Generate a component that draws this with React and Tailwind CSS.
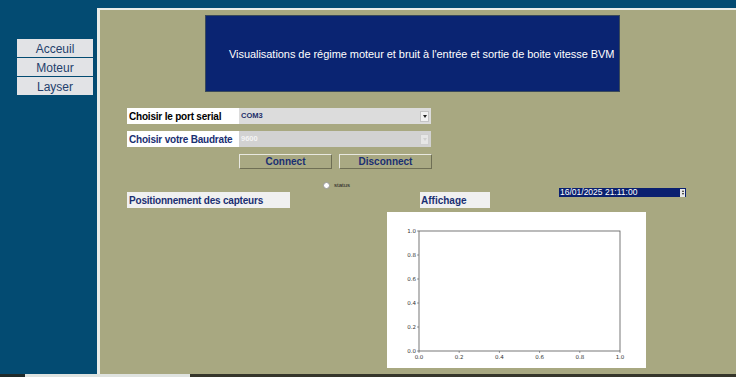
const FONT = { fontFamily: '"Liberation Sans", Arial, sans-serif' }

function Chart() {
  const x0 = 32, x1 = 233, y0 = 19, y1 = 139
  const ticks = [0, 0.2, 0.4, 0.6, 0.8, 1]
  return (
    <svg width="259" height="156" className="block">
      <rect x={x0} y={y0} width={x1 - x0} height={y1 - y0} fill="white" stroke="#555" strokeWidth="0.8" />
      {ticks.map((t) => {
        const y = y1 - t * (y1 - y0)
        const x = x0 + t * (x1 - x0)
        return (
          <g key={t} fontSize="5.5" fill="#333" fontFamily="DejaVu Sans, sans-serif">
            <line x1={x0 - 2} x2={x0} y1={y} y2={y} stroke="#555" strokeWidth="0.6" />
            <text x={x0 - 3} y={y + 2} textAnchor="end">{t.toFixed(1)}</text>
            <line x1={x} x2={x} y1={y1} y2={y1 + 2} stroke="#555" strokeWidth="0.6" />
            <text x={x} y={y1 + 8} textAnchor="middle">{t.toFixed(1)}</text>
          </g>
        )
      })}
    </svg>
  )
}

export default function App() {
  return (
    <div style={FONT} className="w-[736px] h-[377px] bg-[#034b72] flex flex-col overflow-hidden whitespace-nowrap">
      <div className="h-[8px] shrink-0" />
      <div className="flex flex-1 min-h-0">
        <div className="w-[97px] shrink-0 pt-[31px] pl-[17px]">
          <div className="w-[76px] flex flex-col gap-px">
            {['Acceuil', 'Moteur', 'Layser'].map((l) => (
              <div key={l} className="h-[18px] pt-px bg-[#e2e3e6] text-[#243f6c] text-[12px] flex items-center justify-center">{l}</div>
            ))}
          </div>
        </div>
        <div className="flex-1 bg-[#a8a881] border-l-[3px] border-t-[2px] border-[#e9ece9] flex flex-col">
          <div className="ml-[105px] mt-[5px] w-[415px] h-[77px] pt-[2px] pl-[23px] bg-[#0a2472] border border-[#3a4a5a] flex items-center text-white text-[11px] tracking-[-0.05px]">
            Visualisations de régime moteur et bruit à l'entrée et sortie de boite vitesse BVM
          </div>

          <div className="ml-[27px] mt-[16px] flex h-[16px]">
            <div className="w-[112px] bg-white text-black font-bold text-[10px] tracking-[-0.2px] flex items-center pl-[2px] overflow-hidden">Choisir le port serial</div>
            <div className="w-[192px] bg-[#dcdcdc] flex items-center justify-between">
              <span className="text-[#1e2f6a] font-bold text-[7.5px] pl-[2px]">COM3</span>
              <span className="w-[9px] h-[11px] mr-[2px] bg-[#f2f2f2] border border-[#c4c4c4] flex items-center justify-center">
                <span className="w-0 h-0 border-l-[2.5px] border-r-[2.5px] border-t-[3px] border-l-transparent border-r-transparent border-t-[#222]" />
              </span>
            </div>
          </div>

          <div className="ml-[27px] mt-[7px] flex h-[16px]">
            <div className="w-[112px] bg-white text-[#1a2f72] font-bold text-[10px] tracking-[-0.2px] flex items-center pl-[2px] overflow-hidden">Choisir votre Baudrate</div>
            <div className="w-[192px] bg-[#d2d2d2] flex items-center justify-between">
              <span className="text-[#f4f4f4] font-bold text-[7.5px] pl-[2px]">9600</span>
              <span className="w-[9px] h-[11px] mr-[2px] bg-[#e6e6e6] border border-[#cfcfcf] flex items-center justify-center">
                <span className="w-0 h-0 border-l-[2.5px] border-r-[2.5px] border-t-[3px] border-l-transparent border-r-transparent border-t-[#d0d0d0]" />
              </span>
            </div>
          </div>

          <div className="ml-[139px] mt-[7px] flex gap-[7px]">
            {['Connect', 'Disconnect'].map((b) => (
              <div key={b} className="w-[93px] h-[15px] bg-[#a9a983] border border-[#e8e8e0] border-r-[#6f6f55] border-b-[#6f6f55] text-[#1a2f72] font-bold text-[10px] flex items-center justify-center">{b}</div>
            ))}
          </div>

          <div className="ml-[223px] mt-[12px] h-[8px] flex items-center gap-[4px]">
            <span className="w-[7px] h-[7px] rounded-full bg-white border border-[#999]" />
            <span className="text-[6px] text-[#222]">status</span>
          </div>

          <div className="ml-[27px] mt-[3px] flex items-start h-[16px]">
            <div className="w-[163px] h-[16px] bg-[#f0f0f0] text-[#1a2f72] font-bold text-[10px] tracking-[-0.2px] flex items-center pl-[2px]">Positionnement des capteurs</div>
            <div className="ml-[130px] w-[70px] h-[16px] bg-[#f0f0f0] text-[#1a2f72] font-bold text-[10px] flex items-center pl-[1px]">Affichage</div>
            <div className="ml-[69px] -mt-[4px] w-[127px] h-[9px] bg-[#0a2070] flex items-center justify-between">
              <span className="text-white text-[8.5px] leading-none pl-[1px]">16/01/2025 21:11:00</span>
              <span className="w-[5px] h-[8px] mr-px bg-[#e8e8e8] flex flex-col items-center justify-center gap-[1px]">
                <span className="w-0 h-0 border-l-[1.5px] border-r-[1.5px] border-b-[2px] border-l-transparent border-r-transparent border-b-[#222]" />
                <span className="w-0 h-0 border-l-[1.5px] border-r-[1.5px] border-t-[2px] border-l-transparent border-r-transparent border-t-[#222]" />
              </span>
            </div>
          </div>

          <div className="ml-[287px] mt-[4px] w-[259px] h-[156px] bg-white">
            <Chart />
          </div>
        </div>
      </div>
      <div className="h-[3px] shrink-0 flex">
        <div className="w-[25px] bg-[#1f2a2a]" />
        <div className="w-[165px] bg-[#dfe3e0]" />
        <div className="flex-1 bg-[#35352a]" />
      </div>
    </div>
  )
}
